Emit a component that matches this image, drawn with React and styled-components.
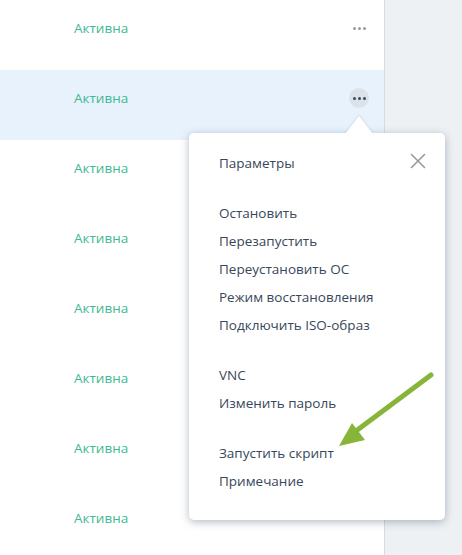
import React from "react";
import styled, { createGlobalStyle } from "styled-components";

const Global = createGlobalStyle`
  html, body { margin: 0; padding: 0; }
  body {
    font-family: "Open Sans", "Noto Sans", sans-serif;
    background: #edf1f4;
    overflow: hidden;
  }
`;

const Page = styled.div`
  display: flex;
  height: 555px;
  width: 462px;
`;

const List = styled.div`
  width: 384px;
  border-right: 1px solid #d8dce1;
  background: #ffffff;
  display: flex;
  flex-direction: column;
  flex-shrink: 0;
`;

const Side = styled.div`
  flex: 1;
  background: #edf1f4;
`;

const Row = styled.div`
  position: relative;
  height: 70px;
  flex-shrink: 0;
  display: flex;
  align-items: flex-start;
  justify-content: space-between;
  padding: 18px 15px 0 74px;
  box-sizing: border-box;
  background: ${(p) => (p.$active ? "#e8f2fd" : "#ffffff")};
`;

const Status = styled.span`
  font-size: 13.5px;
  line-height: 20px;
  color: #3fb994;
`;

const DotsButton = styled.div`
  position: relative;
  width: 20px;
  height: 20px;
  border-radius: 50%;
  background: ${(p) => (p.$active ? "#dce2ea" : "transparent")};
  display: flex;
  align-items: center;
  justify-content: center;
  gap: 2px;
`;

const Dot = styled.span`
  width: 3px;
  height: 3px;
  border-radius: 50%;
  background: ${(p) => (p.$active ? "#3c4a5a" : "#9a9a9a")};
`;

const Menu = styled.div`
  position: absolute;
  top: 63px;
  left: 189px;
  width: 256px;
  height: 387px;
  box-sizing: border-box;
  background: #ffffff;
  border-radius: 5px;
  box-shadow: 0 2px 8px rgba(40, 60, 90, 0.35);
  padding: 16px 30px 0 30px;
  z-index: 10;
  display: flex;
  flex-direction: column;
  &::before {
    content: "";
    position: absolute;
    top: -17px;
    left: 156px;
    width: 0;
    height: 0;
    border-left: 14px solid transparent;
    border-right: 14px solid transparent;
    border-bottom: 18px solid #ffffff;
    filter: drop-shadow(0 -1px 1px rgba(40, 60, 90, 0.12));
  }
`;

const Group = styled.div`
  display: flex;
  flex-direction: column;
  & + & {
    margin-top: 22px;
  }
`;

const Item = styled.div`
  font-size: 13.5px;
  line-height: 28px;
  height: 28px;
  color: #37475a;
  white-space: nowrap;
`;

const Close = styled.div`
  position: absolute;
  top: 19px;
  right: 19px;
  width: 16px;
  height: 16px;
`;

const Pointer = styled.svg`
  position: absolute;
  left: 0;
  top: 0;
  pointer-events: none;
  z-index: 20;
`;

const groups = [
  ["Параметры"],
  ["Остановить", "Перезапустить", "Переустановить ОС", "Режим восстановления", "Подключить ISO-образ"],
  ["VNC", "Изменить пароль"],
  ["Запустить скрипт", "Примечание"],
];

function Dots({ active }) {
  return (
    <DotsButton $active={active}>
      <Dot $active={active} />
      <Dot $active={active} />
      <Dot $active={active} />
    </DotsButton>
  );
}

export default function App() {
  const rows = Array.from({ length: 8 }, (_, i) => i);
  return (
    <>
      <Global />
      <Page>
        <List>
          {rows.map((i) => (
            <Row key={i} $active={i === 1}>
              <Status>Активна</Status>
              <Dots active={i === 1} />
              {i === 1 && (
                <Menu>
                  <Close>
                    <svg width="16" height="16" viewBox="0 0 16 16">
                      <path d="M1.5 1.5 L14.5 14.5 M14.5 1.5 L1.5 14.5" stroke="#9a9a9a" strokeWidth="1.6" strokeLinecap="round" />
                    </svg>
                  </Close>
                  {groups.map((g, gi) => (
                    <Group key={gi}>
                      {g.map((t) => (
                        <Item key={t}>{t}</Item>
                      ))}
                    </Group>
                  ))}
                </Menu>
              )}
            </Row>
          ))}
        </List>
        <Side />
      </Page>
      <Pointer width="462" height="555" viewBox="0 0 462 555">
        <line x1="431" y1="375" x2="356" y2="431" stroke="#86b53a" strokeWidth="5" strokeLinecap="round" />
        <polygon points="339,446 352,423 365,440" fill="#86b53a" />
      </Pointer>
    </>
  );
}
